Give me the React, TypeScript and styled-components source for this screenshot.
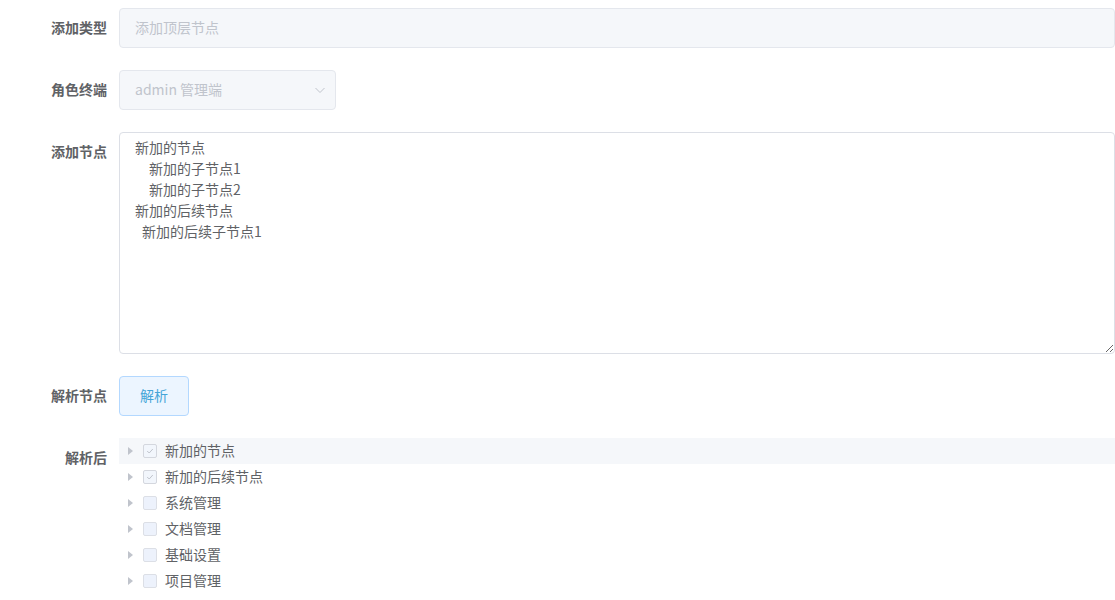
import React from 'react';
import styled, { createGlobalStyle } from 'styled-components';

const GlobalStyle = createGlobalStyle`
  html, body {
    margin: 0;
    padding: 0;
    background: #fff;
    font-family: "Noto Sans CJK SC", "Noto Sans", sans-serif;
  }
  * { box-sizing: border-box; }
`;

const Form = styled.form`
  padding-top: 8px;
  width: 1115px;
  display: flex;
  flex-direction: column;
  gap: 22px;
`;

const Row = styled.div`
  display: flex;
  align-items: flex-start;
`;

const Label = styled.label`
  width: 107px;
  margin-right: 12px;
  flex-shrink: 0;
  text-align: right;
  line-height: 38px;
  padding-bottom: 2px;
  font-size: 14px;
  font-weight: 700;
  color: #606266;
`;

const Field = styled.div<{ $width?: number }>`
  position: relative;
  flex: ${(p) => (p.$width ? '0 0 auto' : '1')};
  width: ${(p) => (p.$width ? `${p.$width}px` : 'auto')};
`;

const Input = styled.input`
  width: 100%;
  height: 40px;
  padding: 0 15px 2px;
  border: 1px solid #e4e7ed;
  border-radius: 4px;
  background: #f5f7fa;
  font-family: inherit;
  font-size: 14px;
  color: #c0c4cc;
  outline: none;
  &::placeholder { color: #c0c4cc; }
`;

const Arrow = styled.span`
  position: absolute;
  right: 10px;
  top: 0;
  height: 40px;
  display: flex;
  align-items: center;
  color: #c0c4cc;
`;

const TextArea = styled.textarea`
  display: block;
  width: 100%;
  height: 222px;
  padding: 4px 15px;
  border: 1px solid #dcdfe6;
  border-radius: 4px;
  background: #fff;
  font-family: "Noto Sans CJK SC", sans-serif;
  font-size: 14px;
  line-height: 21px;
  color: #606266;
  resize: vertical;
  outline: none;
`;

const Button = styled.button`
  height: 40px;
  padding: 0 20px 2px;
  border: 1px solid #b3d8ff;
  border-radius: 4px;
  background: #ecf5ff;
  color: #45a5d8;
  font-family: inherit;
  font-size: 14px;
  cursor: pointer;
`;

const Tree = styled.div`
  flex: 1;
  display: flex;
  flex-direction: column;
`;

const Node = styled.div<{ $current?: boolean }>`
  height: 26px;
  display: flex;
  align-items: center;
  padding-left: 9px;
  background: ${(p) => (p.$current ? '#f5f7fa' : 'transparent')};
  font-size: 14px;
  color: #606266;
`;

const NodeText = styled.span`
  margin-top: -2px;
`;

const Caret = styled.span`
  width: 0;
  height: 0;
  border-top: 4px solid transparent;
  border-bottom: 4px solid transparent;
  border-left: 5px solid #c0c4cc;
  margin-right: 10px;
`;

const Check = styled.span<{ $checked?: boolean }>`
  width: 14px;
  height: 14px;
  border: 1px solid ${(p) => (p.$checked ? '#d4d7de' : '#dcdfe6')};
  border-radius: 2px;
  background: ${(p) => (p.$checked ? '#f2f6fc' : '#edf2fc')};
  margin-right: 8px;
  display: flex;
  align-items: center;
  justify-content: center;
`;

const nodes = [
  { name: '新加的节点', checked: true, current: true },
  { name: '新加的后续节点', checked: true },
  { name: '系统管理' },
  { name: '文档管理' },
  { name: '基础设置' },
  { name: '项目管理' },
];

const text =
  '新加的节点\n\u2002\u2002新加的子节点1\n\u2002\u2002新加的子节点2\n新加的后续节点\n\u2002新加的后续子节点1';

export default function App() {
  return (
    <>
      <GlobalStyle />
      <Form onSubmit={(e) => e.preventDefault()}>
        <Row>
          <Label>添加类型</Label>
          <Field>
            <Input disabled placeholder="添加顶层节点" />
          </Field>
        </Row>
        <Row>
          <Label>角色终端</Label>
          <Field $width={217}>
            <Input disabled value="admin 管理端" readOnly />
            <Arrow>
              <svg width="12" height="12" viewBox="0 0 12 12">
                <path d="M1.5 4 L6 8.5 L10.5 4" fill="none" stroke="#c0c4cc" strokeWidth="1" />
              </svg>
            </Arrow>
          </Field>
        </Row>
        <Row>
          <Label>添加节点</Label>
          <Field>
            <TextArea defaultValue={text} />
          </Field>
        </Row>
        <Row>
          <Label>解析节点</Label>
          <Button type="button">解析</Button>
        </Row>
        <Row>
          <Label>解析后</Label>
          <Tree>
            {nodes.map((n) => (
              <Node key={n.name} $current={n.current}>
                <Caret />
                <Check $checked={n.checked}>
                  {n.checked && (
                    <svg width="10" height="10" viewBox="0 0 10 10">
                      <path d="M2.2 5 L4.2 7 L7.8 3" fill="none" stroke="#c0c4cc" strokeWidth="1" />
                    </svg>
                  )}
                </Check>
                <NodeText>{n.name}</NodeText>
              </Node>
            ))}
          </Tree>
        </Row>
      </Form>
    </>
  );
}
